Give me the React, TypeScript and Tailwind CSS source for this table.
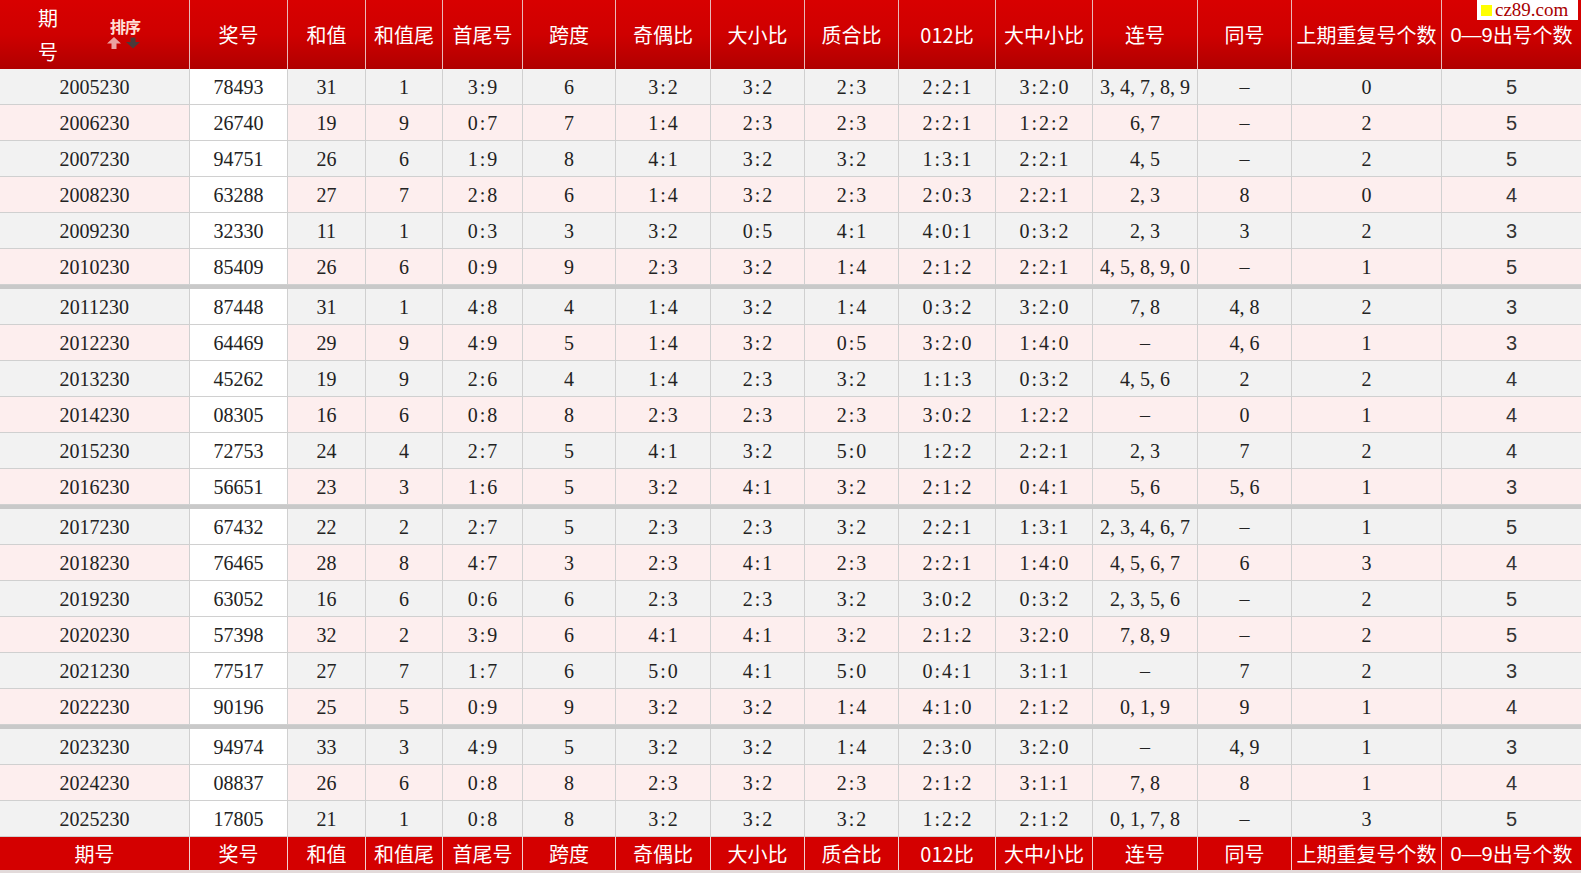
import React from "react";

type Row = [string, string, string, string, string, string, string, string, string, string, string, string, string, string, string];

const ROWS: Row[] = [
  ["2005230", "78493", "31", "1", "3:9", "6", "3:2", "3:2", "2:3", "2:2:1", "3:2:0", "3, 4, 7, 8, 9", "–", "0", "5"],
  ["2006230", "26740", "19", "9", "0:7", "7", "1:4", "2:3", "2:3", "2:2:1", "1:2:2", "6, 7", "–", "2", "5"],
  ["2007230", "94751", "26", "6", "1:9", "8", "4:1", "3:2", "3:2", "1:3:1", "2:2:1", "4, 5", "–", "2", "5"],
  ["2008230", "63288", "27", "7", "2:8", "6", "1:4", "3:2", "2:3", "2:0:3", "2:2:1", "2, 3", "8", "0", "4"],
  ["2009230", "32330", "11", "1", "0:3", "3", "3:2", "0:5", "4:1", "4:0:1", "0:3:2", "2, 3", "3", "2", "3"],
  ["2010230", "85409", "26", "6", "0:9", "9", "2:3", "3:2", "1:4", "2:1:2", "2:2:1", "4, 5, 8, 9, 0", "–", "1", "5"],
  ["2011230", "87448", "31", "1", "4:8", "4", "1:4", "3:2", "1:4", "0:3:2", "3:2:0", "7, 8", "4, 8", "2", "3"],
  ["2012230", "64469", "29", "9", "4:9", "5", "1:4", "3:2", "0:5", "3:2:0", "1:4:0", "–", "4, 6", "1", "3"],
  ["2013230", "45262", "19", "9", "2:6", "4", "1:4", "2:3", "3:2", "1:1:3", "0:3:2", "4, 5, 6", "2", "2", "4"],
  ["2014230", "08305", "16", "6", "0:8", "8", "2:3", "2:3", "2:3", "3:0:2", "1:2:2", "–", "0", "1", "4"],
  ["2015230", "72753", "24", "4", "2:7", "5", "4:1", "3:2", "5:0", "1:2:2", "2:2:1", "2, 3", "7", "2", "4"],
  ["2016230", "56651", "23", "3", "1:6", "5", "3:2", "4:1", "3:2", "2:1:2", "0:4:1", "5, 6", "5, 6", "1", "3"],
  ["2017230", "67432", "22", "2", "2:7", "5", "2:3", "2:3", "3:2", "2:2:1", "1:3:1", "2, 3, 4, 6, 7", "–", "1", "5"],
  ["2018230", "76465", "28", "8", "4:7", "3", "2:3", "4:1", "2:3", "2:2:1", "1:4:0", "4, 5, 6, 7", "6", "3", "4"],
  ["2019230", "63052", "16", "6", "0:6", "6", "2:3", "2:3", "3:2", "3:0:2", "0:3:2", "2, 3, 5, 6", "–", "2", "5"],
  ["2020230", "57398", "32", "2", "3:9", "6", "4:1", "4:1", "3:2", "2:1:2", "3:2:0", "7, 8, 9", "–", "2", "5"],
  ["2021230", "77517", "27", "7", "1:7", "6", "5:0", "4:1", "5:0", "0:4:1", "3:1:1", "–", "7", "2", "3"],
  ["2022230", "90196", "25", "5", "0:9", "9", "3:2", "3:2", "1:4", "4:1:0", "2:1:2", "0, 1, 9", "9", "1", "4"],
  ["2023230", "94974", "33", "3", "4:9", "5", "3:2", "3:2", "1:4", "2:3:0", "3:2:0", "–", "4, 9", "1", "3"],
  ["2024230", "08837", "26", "6", "0:8", "8", "2:3", "3:2", "2:3", "2:1:2", "3:1:1", "7, 8", "8", "1", "4"],
  ["2025230", "17805", "21", "1", "0:8", "8", "3:2", "3:2", "3:2", "1:2:2", "2:1:2", "0, 1, 7, 8", "–", "3", "5"],
];

const HEADERS = ["奖号", "和值", "和值尾", "首尾号", "跨度", "奇偶比", "大小比", "质合比", "012比", "大中小比", "连号", "同号", "上期重复号个数"];

const GRID =
  "grid grid-cols-[190px_98px_78px_77px_80px_93px_95px_94px_94px_97px_97px_105px_94px_150px_139px]";

const CJK = "font-['Noto_Sans_CJK_SC','Noto_Sans',sans-serif]";
const SERIF = "font-['Liberation_Serif','Noto_Sans_CJK_SC',serif]";

function SortIcon() {
  return (
    <div className="flex flex-col items-center">
      <span className="text-[16px] font-bold leading-none text-[#ffe0d8] tracking-[-1px]">排序</span>
      <svg width="38" height="12" viewBox="0 0 38 12" className="mt-[3px]">
        <path d="M1 6.5 L8 0 L15 6.5 L10.5 6.5 L10.5 12 L5.5 12 L5.5 6.5 Z" fill="#eba3a3" />
        <path d="M20 5 L27 11.5 L34 5 L29.5 5 L29.5 0.5 L24.5 0.5 L24.5 5 Z" fill="#4a3a3a" />
      </svg>
    </div>
  );
}

function Logo() {
  return (
    <div className="absolute top-0 right-[3px] flex h-[20px] w-[101px] items-center gap-[3px] bg-white pl-[4px]">
      <span className="h-[11px] w-[11px] shrink-0 bg-[#ffff00]" />
      <span className="font-['Liberation_Serif',serif] text-[19px] leading-[20px] text-[#a80000]">cz89.com</span>
    </div>
  );
}

export default function App() {
  return (
    <div className="relative w-[1581px] bg-white text-[#222]">
      <Logo />

      {/* header */}
      <div className={`${GRID} h-[69px] bg-gradient-to-b from-[#d80000] via-[#cf0000] to-[#b00000] text-white ${CJK} text-[20px]`}>
        <div className="flex items-center border-r border-[#e9b8b8] pl-[38px]">
          <div className="flex flex-col leading-[34px]">
            <span>期</span>
            <span>号</span>
          </div>
          <div className="ml-[48px] -mt-[2px]">
            <SortIcon />
          </div>
        </div>
        {HEADERS.map((h) => (
          <div key={h} className="flex items-center justify-center whitespace-nowrap border-r border-[#e9b8b8]">
            {h}
          </div>
        ))}
        <div className="flex items-center justify-center whitespace-nowrap">
          <span className="font-['Liberation_Sans',sans-serif]">0—9</span>出号个数
        </div>
      </div>

      {/* body */}
      {ROWS.map((r, i) => {
        const groupStart = i === 6 || i === 12 || i === 18;
        const bg = i % 2 === 0 ? "bg-[#f2f2f2]" : "bg-[#fdeeee]";
        return (
          <div key={r[0]} className={`${GRID} ${groupStart ? "h-10 border-t-4 border-[#c9c9c9]" : "h-9"} ${SERIF} text-[20px]`}>
            {r.map((v, j) => {
              const cellBg = j === 1 ? "bg-white" : bg;
              const ratio = v.includes(":");
              const font = j === 14 ? "font-['Liberation_Sans',sans-serif] text-[#333]" : "";
              return (
                <div
                  key={j}
                  className={`flex items-center justify-center whitespace-nowrap border-b border-[#d0d0d0] ${j < 14 ? "border-r" : ""} ${cellBg} ${font}`}
                >
                  <span className={ratio ? "tracking-[2px] pl-[2px]" : ""}>{v}</span>
                </div>
              );
            })}
          </div>
        );
      })}

      {/* footer */}
      <div className={`${GRID} h-[36px] border-b-[3px] border-[#e2dada] bg-[#d40000] text-white ${CJK} text-[20px]`}>
        {["期号", ...HEADERS].map((h) => (
          <div key={h} className="flex items-center justify-center whitespace-nowrap border-r border-[#f3d0d0]">
            {h}
          </div>
        ))}
        <div className="flex items-center justify-center whitespace-nowrap">
          <span className="font-['Liberation_Sans',sans-serif]">0—9</span>出号个数
        </div>
      </div>
    </div>
  );
}
